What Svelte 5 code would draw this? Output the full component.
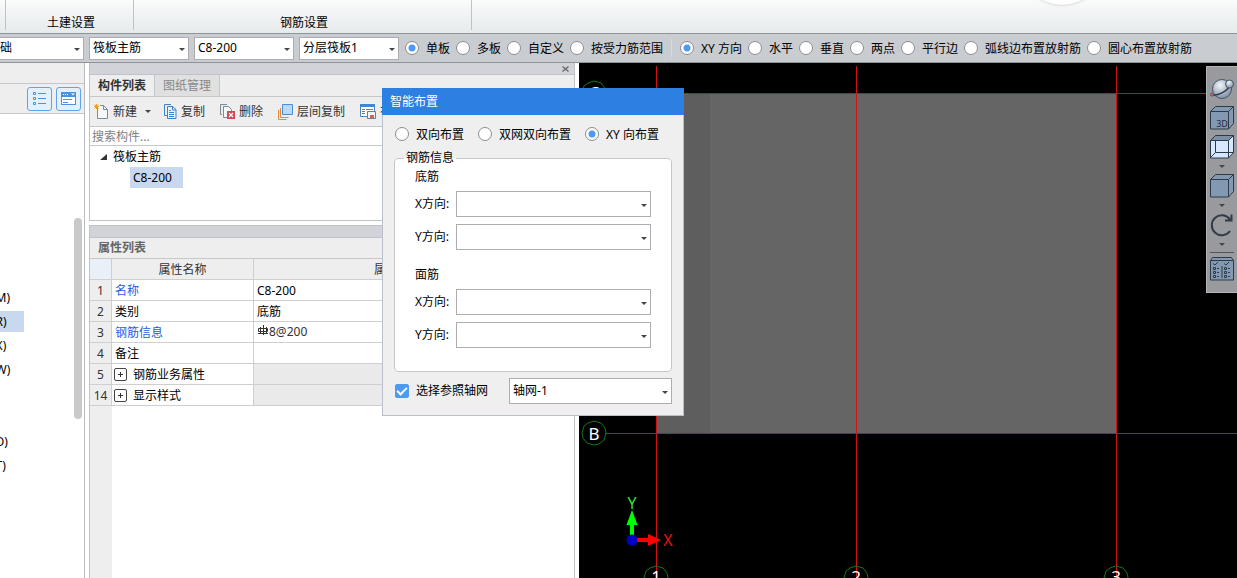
<script lang="ts">
	let drawMode = $state('单板');
	let direction = $state('XY 方向');
	let layout = $state('XY 向布置');
	let useGrid = $state(true);

	const pickers = [
		{ label: '构件类型', value: '基础' },
		{ label: '构件', value: '筏板主筋' },
		{ label: '规格', value: 'C8-200' },
		{ label: '分层', value: '分层筏板1' }
	];

	const drawModes = ['单板', '多板', '自定义', '按受力筋范围'];
	const directions = ['XY 方向', '水平', '垂直', '两点', '平行边', '弧线边布置放射筋', '圆心布置放射筋'];
	const layouts = ['双向布置', '双网双向布置', 'XY 向布置'];

	const navItems = ['(M)', '(R)', '(X)', '(W)', '', '', '(D)', '(T)'];

	const rows = [
		{ no: 1, name: '名称', value: 'C8-200', link: true },
		{ no: 2, name: '类别', value: '底筋' },
		{ no: 3, name: '钢筋信息', value: '8@200', link: true, rebar: true },
		{ no: 4, name: '备注', value: '' },
		{ no: 5, name: '钢筋业务属性', group: true },
		{ no: 14, name: '显示样式', group: true }
	];

	const rebarGroups = [
		{ id: 'bottom', title: '底筋' },
		{ id: 'top', title: '面筋' }
	];

	const bubble = '0,-12 7,-10 11,-5 12,0 10,7 5,11 0,12 -7,10 -11,5 -12,0 -10,-7 -6,-10';
</script>

<div class="app">
	<header class="ribbon">
		<div class="ribbon-group"></div>
		<div class="ribbon-group">土建设置</div>
		<div class="ribbon-group">钢筋设置</div>
		<div class="knob"></div>
	</header>

	<div class="options">
		<div class="pickers">
			{#each pickers as p}
				<span class="combo">
					<select aria-label={p.label}><option>{p.value}</option></select>
				</span>
			{/each}
		</div>
		<div class="radios">
			{#each drawModes as m}
				<label><input type="radio" name="mode" value={m} bind:group={drawMode} />{m}</label>
			{/each}
		</div>
		<i class="divider"></i>
		<div class="radios">
			{#each directions as d}
				<label><input type="radio" name="direction" value={d} bind:group={direction} />{d}</label>
			{/each}
		</div>
	</div>

	<main class="workspace">
		<nav class="nav">
			<div class="nav-head"></div>
			<div class="nav-tools">
				<button aria-label="列表">
					<svg width="13" height="13" viewBox="0 0 13 13" fill="none" stroke="#4a93e0">
						<path d="M.5 .5h2v2h-2zM.5 5.500h2v2h-2zM.5 10.500h2v2h-2zM5 1.500h8M5 6.500h8M5 11.500h8" />
					</svg>
				</button>
				<button aria-label="窗口">
					<svg width="15" height="13" viewBox="0 0 15 13">
						<rect x=".5" y=".5" width="14" height="12" fill="#fff" stroke="#4a93e0" />
						<path d="M0 0h15v5H0z" fill="#4a93e0" />
						<path d="M2 2h1v1H2zM4 2h1v1H4zM6 2h1v1H6zM10 1.500h4l-2 2z" fill="#fff" />
						<path d="M2 7.500h9M2 10.500h5" stroke="#4a93e0" />
					</svg>
				</button>
			</div>
			<ul>
				{#each navItems as item, i}
					<li class:active={i === 1}>{item}</li>
				{/each}
			</ul>
			<div class="thumb"></div>
		</nav>

		<div class="side">
			<section class="panel list">
				<div class="grip">
					<button aria-label="关闭">
						<svg width="7" height="6" viewBox="0 0 7 6"><path d="M.5 .5l6 5M6.500 .5l-6 5" stroke="#666" stroke-width="1.300" /></svg>
					</button>
				</div>
				<div class="tabs">
					<button class="current">构件列表</button>
					<button>图纸管理</button>
				</div>
				<div class="actions">
					<button class="new">
						<svg width="15" height="15" viewBox="0 0 15 15">
							<path d="M3.500 4V14.500h10V5.500L9.500 1.500H6" fill="#f6f7f8" stroke="#7b8a99" />
							<path d="M9.500 1.500v4h4" fill="none" stroke="#7b8a99" />
							<path d="M2.500 0v5M0 2.500h5M.5 .5l4 4M4.500 .5l-4 4" stroke="#f0a030" />
						</svg>
						新建<i class="caret"></i>
					</button>
					<button class="copy">
						<svg width="13" height="15" viewBox="0 0 13 15" fill="#e8f2fd" stroke="#3f7fcb">
							<path d="M7 .5H.5v11H3" />
							<path d="M3.500 2.500h5l3.500 3v9H3.500zM8.500 2.500v3.500H12" />
							<path d="M5 6.500h2M5 8.500h5M5 10.500h5M5 12.500h5" />
						</svg>
						复制
					</button>
					<button class="remove">
						<svg width="15" height="15" viewBox="0 0 15 15">
							<path d="M7 .5H.5v10H2" fill="none" stroke="#7b8a99" />
							<path d="M3.500 2.500h5l3 3v8h-8z" fill="#f6f7f8" stroke="#7b8a99" />
							<path d="M7 7h8v8H7z" fill="#cf4a55" />
							<path d="M9 9l4 4M13 9l-4 4" stroke="#fff" stroke-width="1.200" />
						</svg>
						删除
					</button>
					<button class="floor">
						<svg width="15" height="16" viewBox="0 0 15 16" fill="none">
							<path d="M.5 6v9.500h8M2.500 4v9.500h8" stroke="#e8873a" />
							<path d="M4.500 .5h10v10h-10z" fill="#b9d8fa" stroke="#4a8fdc" />
						</svg>
						层间复制
					</button>
					<button class="save">
						<svg width="16" height="15" viewBox="0 0 16 15">
							<path d="M.5 .5h14v12H.5z" fill="#fff" stroke="#4a84c4" />
							<path d="M0 0h15v3H0z" fill="#4a84c4" />
							<path d="M2 5.500h3M2 7.500h3M2 9.500h3M6 5.500h7" stroke="#4a84c4" />
							<path d="M7.500 7.500h8v7h-8z" fill="#eef5fd" stroke="#4a84c4" />
							<path d="M10 11h4v3.500h-4z" fill="#c96a4a" />
						</svg>
						存档
					</button>
				</div>
				<input class="search" type="text" placeholder="搜索构件..." aria-label="搜索构件" />
				<div class="tree">
					<div class="parent">
						<svg width="7" height="6" viewBox="0 0 7 6"><path d="M7 0v6H0z" fill="#333" /></svg>
						筏板主筋
					</div>
					<div class="child">C8-200</div>
				</div>
			</section>

			<section class="panel props">
				<div class="grip"></div>
				<h2>属性列表</h2>
				<div class="sheet">
					<table>
						<thead>
							<tr><th class="no"></th><th class="name">属性名称</th><th>属性值</th><th class="extra">附加</th></tr>
						</thead>
						<tbody>
							{#each rows as row}
								<tr class:group={row.group}>
									<th class="no">{row.no}</th>
									<td class:link={row.link}>
										{#if row.group}<button class="expand" aria-label="展开"></button>{/if}{row.name}
									</td>
									<td class:rebar={row.rebar}>
										{#if row.rebar}
											<svg width="10" height="11" viewBox="0 0 10 11" fill="none" stroke="#333">
												<path d="M5.500 0v10M2.500 2v7M8.500 2v7M0 8.500h10M.5 3.500h9v3h-9z" />
											</svg>
										{/if}{row.value ?? ''}
									</td>
									<td></td>
								</tr>
							{/each}
						</tbody>
					</table>
				</div>
			</section>
		</div>

		<section class="canvas">
			<svg class="scene" aria-label="轴网">
				<rect x="77" y="30" width="460" height="340" fill="#656565" />
				<rect x="77" y="30" width="54" height="340" fill="#5e5e5e" />
				<rect x="26" y="370" width="51" height="1" fill="#0b7014" />
				<g fill="#d01212" shape-rendering="crispEdges">
					<rect x="77" y="30" width="2000" height="1" fill="#e60000" />
					<rect x="77" y="370" width="2000" height="1" fill="#e60000" />
					<rect x="77" y="3" width="1" height="512" />
					<rect x="277" y="3" width="1" height="512" />
					<rect x="537" y="3" width="1" height="512" />
				</g>
				<g fill="none" stroke="#0d7a18">
					<polygon points={bubble} transform="translate(15 30)" />
					<polygon points={bubble} transform="translate(15 370)" />
					<polygon points={bubble} transform="translate(77 515)" />
					<polygon points={bubble} transform="translate(277 515)" />
					<polygon points={bubble} transform="translate(537 515)" />
				</g>
				<g class="axis">
					<text x="15" y="36">C</text>
					<text x="15" y="377">B</text>
					<text x="77" y="520">1</text>
					<text x="277" y="520">2</text>
					<text x="537" y="520">3</text>
				</g>
				<path d="M51 477V462h-3.500l5.500-15 5.500 15H55v15z" fill="#0f0" />
				<path d="M57 475h12v-4l13 6-13 6v-4H57z" fill="#f00" />
				<circle cx="53" cy="477" r="5.500" fill="#0000c8" />
				<text class="ucs" x="53" y="446" fill="#2fe02f">Y</text>
				<text class="ucs" x="89" y="483" fill="#f01010">X</text>
			</svg>

			<div class="view-tools">
				<button aria-label="动态观察">
					<svg width="24" height="24" viewBox="0 0 24 24">
						<defs>
							<radialGradient id="ball" cx=".4" cy=".3" r=".8">
								<stop offset="0" stop-color="#f2f6fa" />
								<stop offset="1" stop-color="#6f8299" />
							</radialGradient>
						</defs>
						<circle cx="12" cy="12" r="9.500" fill="url(#ball)" stroke="#4a5666" />
						<path d="M2 18c6 1 16-4 18-10" fill="none" stroke="#333d4a" stroke-width="1.500" />
						<circle cx="19.500" cy="7" r="4" fill="url(#ball)" stroke="#4a5666" />
						<circle cx="2" cy="17.500" r="1.800" fill="#a8606a" stroke="#4a5666" stroke-width=".5" />
					</svg>
				</button>
				<button aria-label="三维">
					<svg width="24" height="24" viewBox="0 0 24 24" fill="#8398b1" stroke="#2d3a4b">
						<path d="M.5 5.500L5.500 .5h18v17l-5 5.500H.5z" />
						<path d="M.5 5.500h18v17.500M18.500 5.500l5-5" fill="none" />
						<text x="12" y="21" class="cube-text">3D</text>
					</svg>
				</button>
				<button aria-label="线框">
					<svg width="24" height="24" viewBox="0 0 24 24" fill="#d5e8fd" stroke="#2d3a4b">
						<path d="M.5 5.500L5.500 .5h18v17l-5 5.500H.5z" />
						<path d="M.5 5.500L5.500 .5h18l-5 5z" fill="#7d8fa5" />
						<path d="M18.500 5.500v17.500M5.500 5.500v12h18M5.500 17.500l-5 5" fill="none" />
					</svg>
				</button>
				<button class="drop" aria-label="线框选项"><i class="caret"></i></button>
				<button aria-label="实体">
					<svg width="24" height="24" viewBox="0 0 24 24" fill="#8398b1" stroke="#2d3a4b">
						<path d="M.5 5.500L5.500 .5h18v17l-5 5.500H.5z" />
						<path d="M.5 5.500h18v17.500M18.500 5.500l5-5" fill="none" />
					</svg>
				</button>
				<button class="drop" aria-label="实体选项"><i class="caret"></i></button>
				<button aria-label="旋转">
					<svg width="24" height="24" viewBox="0 0 24 24" fill="none" stroke="#333b47" stroke-width="2">
						<path d="M20 18a10 10 0 1 1 0-11.500M21.500 1.500V7.500h-6.500" />
					</svg>
				</button>
				<button class="drop" aria-label="旋转选项"><i class="caret"></i></button>
				<hr />
				<button aria-label="显示设置">
					<svg width="24" height="24" viewBox="0 0 24 24" fill="none" stroke="#2d3a4b">
						<path d="M.5 3.500L2.500 .5h19l2 3v19.500H.5z" fill="#8398b1" />
						<path d="M.5 3.500h23M12 9v12M3 6.500l2 1.500 3-3M14 6.500l2 1.500 3-3" />
						<path d="M3.500 10.500h2v2h-2zM3.500 14.500h2v2h-2zM3.500 18.500h2v2h-2zM14.500 10.500h2v2h-2zM14.500 14.500h2v2h-2zM14.500 18.500h2v2h-2z" />
						<path d="M7 11.500h3M7 15.500h3M7 19.500h3M18 11.500h3M18 15.500h3M18 19.500h3" stroke-dasharray="2 1" />
					</svg>
				</button>
			</div>
		</section>
	</main>

	<div class="dialog" role="dialog" aria-labelledby="dialog-title">
		<h1 id="dialog-title">智能布置</h1>
		<form>
			<div class="radios">
				{#each layouts as l}
					<label><input type="radio" name="layout" value={l} bind:group={layout} />{l}</label>
				{/each}
			</div>
			<fieldset>
				<legend>钢筋信息</legend>
				{#each rebarGroups as g}
					<div class="rebar-group">
						<p>{g.title}</p>
						{#each ['X', 'Y'] as axis}
							<div class="field">
								<label for="{g.id}-{axis}">{axis}方向:</label>
								<span class="combo">
									<select id="{g.id}-{axis}"><option></option></select>
								</span>
							</div>
						{/each}
					</div>
				{/each}
			</fieldset>
			<div class="grid-row">
				<label><input type="checkbox" bind:checked={useGrid} />选择参照轴网</label>
				<span class="combo">
					<select aria-label="轴网"><option>轴网-1</option></select>
				</span>
			</div>
		</form>
	</div>
</div>

<style>
	:global(body) {
		overflow: hidden;
	}

	.app {
		position: relative;
		display: flex;
		flex-direction: column;
		min-height: 100vh;
		overflow: hidden;
		background: #fff;
		color: #000;
		font-family: 'Noto Sans', 'Noto Sans CJK SC', sans-serif;
		font-size: 12px;
		line-height: 16px;
		white-space: nowrap;
	}

	.app * {
		box-sizing: border-box;
	}

	button,
	select,
	input {
		font: inherit;
		color: inherit;
		margin: 0;
	}

	button {
		display: flex;
		align-items: center;
		padding: 0;
		border: 0;
		background: none;
	}

	svg {
		display: block;
		flex-shrink: 0;
	}

	.caret {
		border: 3px solid transparent;
		border-top-color: #444;
		border-bottom: 0;
	}

	/* ── Ribbon ── */
	.ribbon {
		position: relative;
		display: flex;
		height: 34px;
		padding-bottom: 3px;
		overflow: hidden;
		background: linear-gradient(#fafbfb, #e6eaeb);
		border-bottom: 1px solid #8f9499;
	}

	.ribbon-group {
		display: flex;
		align-items: flex-end;
		justify-content: center;
		width: 338px;
		padding-left: 3px;
		border-right: 1px solid #bfc3c6;
		line-height: 14px;
	}

	.ribbon-group:first-child {
		width: 6px;
	}

	.ribbon-group:nth-child(2) {
		width: 128px;
	}

	.knob {
		position: absolute;
		right: 133px;
		bottom: 28px;
		width: 84px;
		height: 84px;
		border-radius: 50%;
		background: #fff;
		box-shadow: 0 0 3px rgba(0, 0, 0, 0.25);
	}

	/* ── Options bar ── */
	.options {
		display: flex;
		align-items: center;
		height: 29px;
		background: #c9cdd2;
		border-bottom: 1px solid #8f9499;
	}

	.pickers {
		display: flex;
		flex-shrink: 0;
		gap: 5px;
		margin: 0 6px 0 -16px;
	}

	.pickers .combo {
		width: 100px;
	}

	.combo {
		position: relative;
		display: block;
	}

	.combo::after {
		content: '';
		position: absolute;
		right: 4px;
		top: 50%;
		border: 3px solid transparent;
		border-top-color: #444;
		border-bottom: 0;
		pointer-events: none;
	}

	select {
		appearance: none;
		display: block;
		width: 100%;
		height: 26px;
		padding: 0 3px;
		border: 1px solid #abadb3;
		border-radius: 0;
		background: #fff;
	}

	.pickers select {
		height: 23px;
	}

	.radios {
		display: flex;
		gap: 6px;
		padding-top: 2px;
	}

	label {
		display: flex;
		align-items: center;
		gap: 7px;
	}

	.radios label {
		align-items: flex-start;
	}

	input[type='radio'] {
		appearance: none;
		width: 14px;
		height: 14px;
		border: 1px solid #8a8d91;
		border-radius: 50%;
		background: #fff;
	}

	input[type='radio']:checked {
		background: radial-gradient(circle, #4c9bf0 0 3px, #fff 4px);
	}

	.divider {
		width: 1px;
		height: 18px;
		margin: 0 8px;
		background: #d8dbdf;
	}

	/* ── Left navigation ── */
	.workspace {
		display: flex;
		flex: 1;
	}

	.nav {
		position: relative;
		flex: 0 0 85px;
		border-right: 1px solid #b8bbc0;
		overflow: hidden;
	}

	.nav-head {
		height: 21px;
		background: #eee;
		border-bottom: 1px solid #c4c7cb;
	}

	.nav-tools {
		display: flex;
		justify-content: flex-end;
		align-items: center;
		gap: 4px;
		height: 30px;
		padding-right: 3px;
		background: #eee;
		border-bottom: 1px solid #c4c7cb;
	}

	.nav-tools button {
		justify-content: center;
		width: 25px;
		height: 24px;
		border: 1px solid #62a3e8;
		border-radius: 3px;
		background: #e3f0fd;
	}

	.nav ul {
		display: flex;
		flex-direction: column;
		gap: 3px;
		margin: 173px 0 0 -8px;
		padding: 0;
		list-style: none;
	}

	.nav li {
		width: 32px;
		height: 21px;
		line-height: 21px;
	}

	.nav li.active {
		background: #c8d8ef;
	}

	.thumb {
		position: absolute;
		top: 155px;
		right: 2px;
		width: 8px;
		height: 201px;
		border-radius: 4px;
		background: #c9c9c9;
	}

	/* ── Component panels ── */
	.side {
		display: flex;
		flex-direction: column;
		gap: 4px;
		flex: 0 0 486px;
		margin: 0 4px;
	}

	.panel {
		border: 1px solid #bfc2c7;
		border-top: 0;
	}

	.grip {
		display: flex;
		justify-content: flex-end;
		align-items: center;
		height: 12px;
		padding-right: 5px;
		background: #d1d3d8;
		border-bottom: 1px solid #c0c3cc;
	}

	.tabs {
		display: flex;
		height: 22px;
		background: #eee;
		border-bottom: 1px solid #c4c7cb;
	}

	.tabs button {
		padding: 0 8px;
		color: #888;
		background: #e0e0e0;
		border-right: 1px solid #c4c7cb;
	}

	.tabs .current {
		color: #333;
		font-weight: bold;
		background: #eee;
	}

	.actions {
		display: flex;
		height: 30px;
		padding-left: 4px;
		overflow: hidden;
		background: #eee;
		border-bottom: 1px solid #c4c7cb;
		color: #333;
	}

	.actions button {
		gap: 4px;
		margin-right: 15px;
	}

	.actions .caret {
		margin-left: 4px;
	}

	.actions .new {
		margin-right: 13px;
	}

	.search {
		display: block;
		width: 100%;
		height: 19px;
		padding: 0 2px;
		border: 0;
		border-bottom: 1px solid #c4c7cb;
		outline: 0;
	}

	.search::placeholder {
		color: #808080;
	}

	.tree {
		height: 74px;
	}

	.parent {
		display: flex;
		align-items: center;
		gap: 6px;
		height: 21px;
		padding-left: 10px;
	}

	.child {
		width: 53px;
		height: 21px;
		margin-left: 40px;
		padding-left: 3px;
		line-height: 21px;
		background: #c8d8ef;
	}

	.props {
		display: flex;
		flex: 1;
		flex-direction: column;
		border-top: 1px solid #bfc2c7;
		border-bottom: 0;
	}

	h2 {
		height: 21px;
		margin: 0;
		padding-left: 8px;
		font-size: 12px;
		line-height: 19px;
		color: #666;
		background: #eee;
		border-bottom: 1px solid #c8c8c8;
	}

	.sheet {
		flex: 1;
		background: linear-gradient(to right, #eee 22px, #fff 22px);
	}

	table {
		width: 100%;
		table-layout: fixed;
		border-collapse: separate;
		border-spacing: 0;
	}

	th,
	td {
		height: 21px;
		padding: 2px 3px 0;
		border: 1px solid #cfcfcf;
		border-width: 0 1px 1px 0;
		background: #fff;
		font-weight: normal;
		line-height: 16px;
		text-align: left;
	}

	th {
		padding: 2px 0 0;
		text-align: center;
		color: #333;
		background: #eee;
	}

	.no {
		width: 22px;
	}

	thead .no {
		background: #eaf0f8;
	}

	.name {
		width: 142px;
	}

	.extra {
		width: 43px;
	}

	.link {
		color: #1f5be0;
	}

	.group td {
		background: #eaeaea;
	}

	.group td:nth-child(2) {
		padding-left: 2px;
		background: #fff;
	}

	.expand {
		display: inline-block;
		width: 13px;
		height: 13px;
		margin-right: 6px;
		border: 1px solid #444;
		border-radius: 2px;
		vertical-align: -1px;
		background:
			linear-gradient(#333, #333) center / 5px 1px no-repeat,
			linear-gradient(#333, #333) center / 1px 5px no-repeat;
	}

	.rebar {
		padding-top: 0;
		color: #333;
	}

	.rebar svg {
		display: inline-block;
		margin: 0 1px;
	}

	/* ── Drawing area ── */
	.canvas {
		position: relative;
		flex: 1;
		overflow: hidden;
		background: #000;
	}

	.scene {
		position: absolute;
		inset: 0;
		width: 100%;
		height: 100%;
	}

	.axis {
		fill: #fff;
		font-family: 'Noto Sans', sans-serif;
		font-size: 17px;
		text-anchor: middle;
	}

	.ucs {
		font-family: 'Noto Sans', sans-serif;
		font-size: 16px;
		text-anchor: middle;
	}

	.view-tools {
		position: absolute;
		top: 3px;
		right: 0;
		display: flex;
		flex-direction: column;
		align-items: center;
		width: 31px;
		padding: 10px 0 11px;
		background: #999a9e;
		border: 1px solid #b5b5b8;
		border-width: 1px 0 1px 1px;
	}

	.view-tools button:nth-child(-n + 2) {
		margin-bottom: 5px;
	}

	.view-tools .drop {
		height: 15px;
	}

	.view-tools hr {
		width: 24px;
		margin: 0 0 4px;
		border: 0;
		border-top: 1px solid #555;
	}

	.cube-text {
		fill: #1f2a38;
		stroke: none;
		font-size: 9px;
		text-anchor: middle;
	}

	/* ── Dialog ── */
	.dialog {
		position: absolute;
		left: 382px;
		top: 88px;
		width: 302px;
		background: #efefef;
		border: 1px solid #b9bfcb;
		border-top: 0;
	}

	h1 {
		margin: 0 -1px;
		padding: 0 8px;
		font-size: 12px;
		font-weight: normal;
		line-height: 27px;
		color: #fff;
		background: #2d80e2;
	}

	form {
		padding: 10px 11px 11px 12px;
	}

	.dialog .radios {
		gap: 14px;
	}

	fieldset {
		min-width: 0;
		margin: 7px 0 6px -1px;
		padding: 3px 20px 23px;
		border: 1px solid #c3c7cc;
		border-radius: 4px;
		background: #fff;
	}

	legend {
		margin-left: -11px;
		padding: 0 2px;
		line-height: 16px;
	}

	.rebar-group + .rebar-group {
		margin-top: 17px;
	}

	p {
		margin: 0 0 6px;
	}

	.field {
		display: flex;
		align-items: center;
	}

	.field + .field {
		margin-top: 7px;
	}

	.field label {
		width: 41px;
	}

	.field .combo {
		flex: 1;
	}

	.grid-row {
		display: flex;
		align-items: center;
		gap: 21px;
	}

	.grid-row .combo {
		flex: 1;
	}

	input[type='checkbox'] {
		appearance: none;
		display: flex;
		justify-content: center;
		width: 14px;
		height: 14px;
		border-radius: 2px;
		background: #fff;
		border: 1px solid #4c9bf0;
	}

	input[type='checkbox']:checked {
		background: #4c9bf0;
	}

	input[type='checkbox']:checked::after {
		content: '';
		width: 4px;
		height: 8px;
		border: solid #fff;
		border-width: 0 2px 2px 0;
		transform: rotate(45deg);
	}
</style>
